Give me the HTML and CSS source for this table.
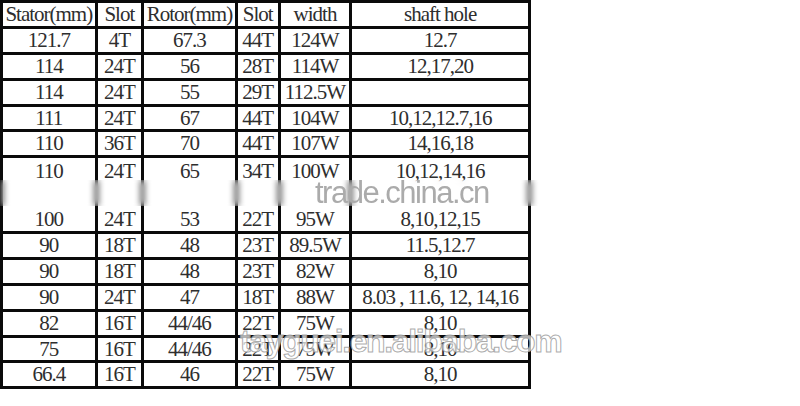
FILE: index.html
```html
<!DOCTYPE html>
<html>
<head>
<meta charset="utf-8">
<link rel="stylesheet" href="styles.css">
</head>
<body>
<div class="page">
  <table class="spec">
    <colgroup>
      <col class="c1"><col class="c2"><col class="c3"><col class="c4"><col class="c5"><col class="c6">
    </colgroup>
    <tr class="r-head"><td>Stator(mm)</td><td>Slot</td><td>Rotor(mm)</td><td>Slot</td><td>width</td><td>shaft hole</td></tr>
    <tr class="r26"><td>121.7</td><td>4T</td><td>67.3</td><td>44T</td><td>124W</td><td>12.7</td></tr>
    <tr class="r26"><td>114</td><td>24T</td><td>56</td><td>28T</td><td>114W</td><td>12,17,20</td></tr>
    <tr class="r26"><td>114</td><td>24T</td><td>55</td><td>29T</td><td>112.5W</td><td></td></tr>
    <tr class="r25"><td>111</td><td>24T</td><td>67</td><td>44T</td><td>104W</td><td>10,12,12.7,16</td></tr>
    <tr class="r25"><td>110</td><td>36T</td><td>70</td><td>44T</td><td>107W</td><td>14,16,18</td></tr>
    <tr class="r-tall">
      <td><div class="l1">110</div><div class="l2">100</div></td>
      <td><div class="l1">24T</div><div class="l2">24T</div></td>
      <td><div class="l1">65</div><div class="l2">53</div></td>
      <td><div class="l1">34T</div><div class="l2">22T</div></td>
      <td><div class="l1">100W</div><div class="l2">95W</div></td>
      <td><div class="l1">10,12,14,16</div><div class="l2">8,10,12,15</div></td>
    </tr>
    <tr class="r26"><td>90</td><td>18T</td><td>48</td><td>23T</td><td>89.5W</td><td>11.5,12.7</td></tr>
    <tr class="r26"><td>90</td><td>18T</td><td>48</td><td>23T</td><td>82W</td><td>8,10</td></tr>
    <tr class="r26"><td>90</td><td>24T</td><td>47</td><td>18T</td><td>88W</td><td>8.03 , 11.6, 12, 14,16</td></tr>
    <tr class="r26"><td>82</td><td>16T</td><td>44/46</td><td>22T</td><td>75W</td><td>8,10</td></tr>
    <tr class="r25"><td>75</td><td>16T</td><td>44/46</td><td>22T</td><td>75W</td><td>8,10</td></tr>
    <tr class="r25"><td>66.4</td><td>16T</td><td>46</td><td>22T</td><td>75W</td><td>8,10</td></tr>
  </table>
  <div class="blurband"></div>
  <div class="wm wm-trade">trade.china.cn</div>
  <div class="wm wm-ali">tayguei.en.alibaba.com</div>
</div>
</body>
</html>
```

FILE: styles.css
```css
html, body {
  margin: 0;
  padding: 0;
  background: #fff;
}
.page {
  position: relative;
  width: 800px;
  height: 406px;
  overflow: hidden;
}
.spec {
  border-collapse: collapse;
  table-layout: fixed;
  width: 531px;
  border: 3px solid #000;
}
.c1 { width: 94.5px; }
.c2 { width: 46.5px; }
.c3 { width: 93.5px; }
.c4 { width: 43px; }
.c5 { width: 71.5px; }
.c6 { width: 178.5px; }
.spec td {
  font-family: "Liberation Serif", "DejaVu Serif", serif;
  font-size: 21px;
  letter-spacing: -1px;
  color: #2e2e2e;
  border: 3px solid #0a0a0a;
  text-align: center;
  padding: 0;
  line-height: 20px;
  vertical-align: middle;
  white-space: nowrap;
}
.r-head { height: 25.5px; }
.r26 { height: 26px; }
.r25 { height: 25.5px; }
.r-tall { height: 76px; }
.r-tall td { vertical-align: top; }
.l1 { padding-top: 3px; line-height: 20px; }
.l2 { margin-top: 28px; line-height: 20px; }
.blurband {
  position: absolute;
  left: 0;
  top: 180px;
  width: 545px;
  height: 26px;
  backdrop-filter: blur(3px);
  -webkit-backdrop-filter: blur(3px);
}
.wm {
  position: absolute;
  font-family: "Liberation Sans", Arial, sans-serif;
  line-height: 1;
  white-space: nowrap;
}
.wm-trade {
  left: 315px;
  top: 177px;
  font-size: 31px;
  letter-spacing: -1.5px;
  color: #ababab;
}
.wm-ali {
  left: 240px;
  top: 325px;
  font-size: 32px;
  font-weight: bold;
  letter-spacing: -1.4px;
  color: rgba(255, 255, 255, 0.7);
  -webkit-text-stroke: 1px rgba(150, 150, 150, 0.8);
}
```
